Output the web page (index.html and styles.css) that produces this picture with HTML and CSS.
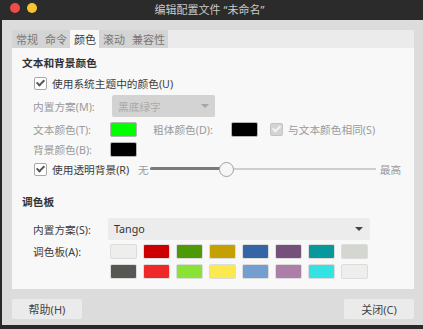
FILE: index.html
```html
<!DOCTYPE html>
<html lang="zh">
  <head>
    <meta charset="UTF-8" />
    <title>编辑配置文件</title>
    <link rel="stylesheet" href="styles.css">
  </head>
  <body>
    <div class="titlebar">
      <span class="dot red"></span>
      <span class="dot yellow"></span>
      <span class="title">编辑配置文件 “未命名”</span>
    </div>
    <div class="main">
      <div class="tabs">
        <span class="tab">常规</span>
        <span class="tab">命令</span>
        <span class="tab active">颜色</span>
        <span class="tab">滚动</span>
        <span class="tab">兼容性</span>
      </div>
      <div class="panel">
        <div class="heading">文本和背景颜色</div>
        <div class="row row-check">
          <span class="check on"></span>
          <span>使用系统主题中的颜色(U)</span>
        </div>
        <div class="row row-combo">
          <span class="label dim">内置方案(M):</span>
          <div class="combo disabled">
            <span>黑底绿字</span>
            <span class="arrow"></span>
          </div>
        </div>
        <div class="row row-color">
          <span class="label dim">文本颜色(T):</span>
          <span class="swatch big" style="background:#00ff00"></span>
          <span class="label-bold dim">粗体颜色(D):</span>
          <span class="swatch big" style="background:#000000"></span>
          <span class="check on disabled"></span>
          <span class="dim">与文本颜色相同(S)</span>
        </div>
        <div class="row row-bg">
          <span class="label dim">背景颜色(B):</span>
          <span class="swatch big" style="background:#000000"></span>
        </div>
        <div class="row row-check row-trans">
          <span class="check on"></span>
          <span class="trans-text">使用透明背景(R)</span>
          <span class="dim none">无</span>
          <div class="slider">
            <div class="fill"></div>
            <div class="knob"></div>
          </div>
          <span class="dim">最高</span>
        </div>

        <div class="heading heading2">调色板</div>
        <div class="row row-combo2">
          <span class="label">内置方案(S):</span>
          <div class="combo wide">
            <span>Tango</span>
            <span class="arrow"></span>
          </div>
        </div>
        <div class="row row-pal">
          <span class="label">调色板(A):</span>
          <div class="palette">
            <span class="swatch" style="background:#eeeeec"></span>
            <span class="swatch" style="background:#cc0000"></span>
            <span class="swatch" style="background:#4e9a06"></span>
            <span class="swatch" style="background:#c4a000"></span>
            <span class="swatch" style="background:#3465a4"></span>
            <span class="swatch" style="background:#75507b"></span>
            <span class="swatch" style="background:#06989a"></span>
            <span class="swatch" style="background:#d3d7cf"></span>
          </div>
        </div>
        <div class="row row-pal row-pal2">
          <span class="label"></span>
          <div class="palette">
            <span class="swatch" style="background:#555753"></span>
            <span class="swatch" style="background:#ef2929"></span>
            <span class="swatch" style="background:#8ae234"></span>
            <span class="swatch" style="background:#fce94f"></span>
            <span class="swatch" style="background:#729fcf"></span>
            <span class="swatch" style="background:#ad7fa8"></span>
            <span class="swatch" style="background:#34e2e2"></span>
            <span class="swatch" style="background:#eeeeec"></span>
          </div>
        </div>
      </div>
      <div class="buttons">
        <button class="btn">帮助(H)</button>
        <button class="btn">关闭(C)</button>
      </div>
    </div>
  </body>
</html>
```

FILE: styles.css
```css
body {
  margin: 0;
  width: 423px;
  height: 329px;
  overflow: hidden;
  background-color: #2a2828;
  font-family: "Noto Sans", "Noto Sans CJK SC", sans-serif;
  font-size: 10.7px;
  color: #3c3c3c;
}
.titlebar {
  position: relative;
  height: 20px;
  background-color: #2b2b2b;
  display: flex;
  align-items: center;
  justify-content: center;
}
.dot {
  position: absolute;
  top: 3px;
  width: 10px;
  height: 10px;
  border-radius: 50%;
}
.red {
  left: 10px;
  background-color: #ef4b4b;
}
.yellow {
  left: 27px;
  background-color: #f7c531;
}
.title {
  color: #c9c9c9;
  font-size: 11px;
  margin-top: -3px;
  margin-right: 4px;
}
.main {
  margin-left: 2px;
  height: 305px;
  background-color: #dcdcdc;
  padding: 10px 9px 0 10px;
  box-sizing: border-box;
}
.tabs {
  display: flex;
  height: 18px;
  background-color: #ebebeb;
}
.tab {
  display: flex;
  align-items: center;
  padding: 0 3px 0 4px;
  background-color: #d4d4d4;
  color: #777;
  font-size: 11px;
}
.tab.active {
  background-color: #f8f8f8;
  color: #3c3c3c;
}
.panel {
  height: 241px;
  background-color: #f8f8f8;
  padding: 7px 0 0 10px;
  box-sizing: border-box;
}
.heading {
  height: 16px;
  line-height: 16px;
  font-weight: bold;
  color: #333;
}
.heading2 {
  margin-top: 15px;
}
.row {
  display: flex;
  align-items: center;
}
.row-check {
  height: 20px;
  margin-top: 2px;
  padding-left: 12px;
}
.row-check .check {
  margin-right: 5px;
}
.check {
  width: 11px;
  height: 11px;
  border: 1px solid #a8a8a8;
  border-radius: 2px;
  background-color: #fff;
  position: relative;
  flex: none;
}
.check.on::after {
  content: "";
  position: absolute;
  left: 3px;
  top: 0px;
  width: 3px;
  height: 6px;
  border: solid #555;
  border-width: 0 2px 2px 0;
  transform: rotate(45deg);
}
.check.disabled {
  background-color: #d4d4d4;
  border-color: #c4c4c4;
  margin: 0 5px 0 12px;
}
.check.disabled::after {
  border-color: #f4f4f4;
}
.label {
  width: 88px;
  padding-left: 11px;
  box-sizing: border-box;
  flex: none;
}
.dim {
  color: #9a9a9a;
}
.row-combo {
  height: 22px;
  margin-top: 2px;
}
.combo {
  display: flex;
  align-items: center;
  justify-content: space-between;
  height: 22px;
  width: 103px;
  margin-left: 2px;
  padding: 0 6px;
  box-sizing: border-box;
  border-radius: 2px;
  background-color: #ececec;
  color: #333;
}
.combo.disabled {
  background-color: #d3d3d3;
  color: #aaa;
}
.arrow {
  width: 0;
  height: 0;
  border-left: 4px solid transparent;
  border-right: 4px solid transparent;
  border-top: 4px solid #444;
}
.disabled .arrow {
  border-top-color: #a6a6a6;
}
.combo.wide {
  width: 262px;
  margin-left: 0;
  padding-right: 7px;
}
.row-color {
  height: 22px;
  margin-top: 1px;
}
.swatch {
  display: inline-block;
  width: 25px;
  height: 13px;
  border: 1px solid #dcdcdc;
  border-radius: 2px;
  flex: none;
}
.swatch.big {
  border-color: #b4b4b4;
}
.label-bold {
  margin: 0 8px 0 16px;
  width: 70px;
  flex: none;
}
.row-bg {
  height: 18px;
}
.row-trans {
  margin-top: 1px;
}
.trans-text {
  width: 83px;
  flex: none;
}
.none {
  margin-left: 3px;
}
.slider {
  position: relative;
  width: 226px;
  height: 14px;
  margin: 0 4px 0 1px;
  flex: none;
}
.slider::before {
  content: "";
  position: absolute;
  left: 0;
  right: 0;
  top: 6px;
  height: 2px;
  background-color: #cfcfcf;
}
.fill {
  position: absolute;
  left: 0;
  top: 5px;
  width: 72px;
  height: 3px;
  background-color: #7b7b7b;
  border-radius: 2px;
}
.knob {
  position: absolute;
  left: 69px;
  top: 0;
  width: 13px;
  height: 13px;
  border: 1px solid #a0a0a0;
  border-radius: 50%;
  background-color: #f6f6f6;
}
.row-combo2 {
  height: 22px;
  margin-top: 8px;
}
.row-combo2 .label {
  width: 86px;
}
.row-pal {
  height: 15px;
  margin-top: 4px;
}
.row-pal2 {
  margin-top: 5px;
}
.palette {
  display: flex;
  gap: 6px;
}
.buttons {
  display: flex;
  justify-content: space-between;
  margin-top: 10px;
}
.btn {
  width: 70px;
  height: 20px;
  border: none;
  border-radius: 2px;
  background-color: #ebebeb;
  font-family: "Noto Sans", "Noto Sans CJK SC", sans-serif;
  font-size: 11px;
  color: #444;
  padding: 0;
}
```
